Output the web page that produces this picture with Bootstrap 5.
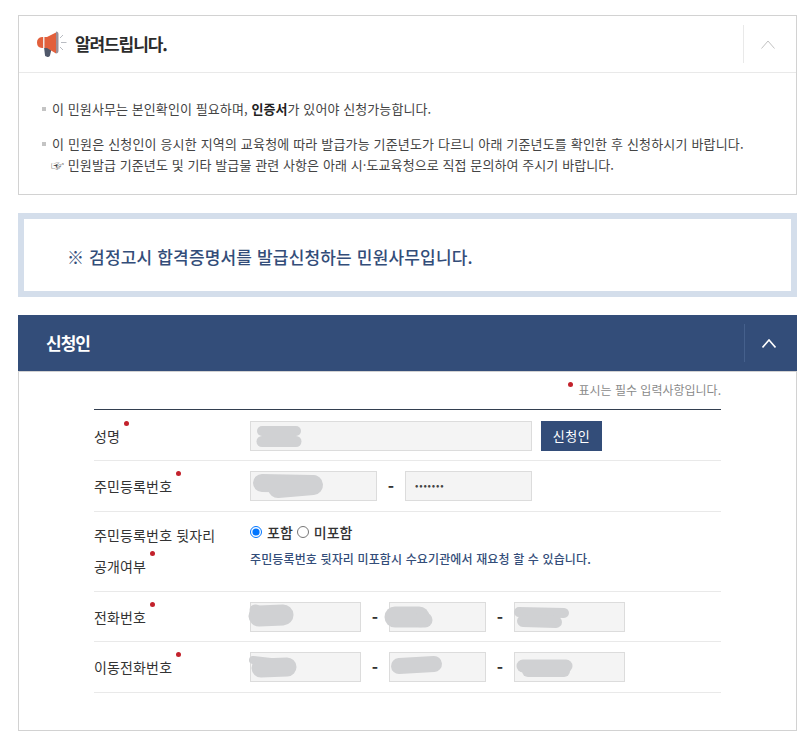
<!DOCTYPE html>
<html lang="ko">
<head>
<meta charset="utf-8">
<title>신청</title>
<link href="https://cdn.jsdelivr.net/npm/bootstrap@5.3.0/dist/css/bootstrap.min.css" rel="stylesheet">
<style>
html,body{background:#fff;overflow:hidden}
body{font-family:"Noto Sans CJK KR","Noto Sans",sans-serif;color:#333;font-size:13px}
.pg{width:779px;margin:15px 0 0 18px}
.pan{border:1px solid #d2d2d2;background:#fff}
.pan-h{height:57px;border-bottom:1px solid #e9e9e9;padding-left:18px}
.pan-t{font-size:17px;font-weight:700;color:#2c2c2c;letter-spacing:-1.1px;margin:0 0 2px 8px;line-height:1}
.tog{width:53px;height:38px;border-left:1px solid #e9e9e9;padding-right:4px}
.tog svg{display:block}
.pan-b{padding:25px 22px 17px 23px;height:121px;font-size:13px;color:#444;letter-spacing:.17px}
.nt{line-height:21px;position:relative;padding-left:10px;margin:0 0 14px;white-space:nowrap}
.nt::before{content:"";position:absolute;left:0;top:9px;width:4px;height:4px;background:#c4c4c4}
.nt b{color:#222}
.nt-s{letter-spacing:.09px}
.notice{margin-top:18px;height:84px;border:6px solid #d4deeb;background:#fff;padding:3px 0 0 43px;font-size:17px;font-weight:500;color:#334d79;letter-spacing:.17px}
.notice p{margin:0;line-height:1}
.blue-h{margin-top:18px;height:57px;background:#334d79;padding-left:28px;border-bottom:1px solid #d2d2d2}
.blue-t{font-size:17px;font-weight:700;color:#fff;letter-spacing:-1px;margin:0 0 2px;line-height:1}
.tog-w{border-left-color:#45608c}
.frm{border:1px solid #d2d2d2;border-top:0;height:359px;padding:0 75px}
.req-n{height:37px;padding-top:10px;font-size:12px;color:#8a8a8a;line-height:16px}
.tb{border-top:1px solid #333f50}
.fr{border-bottom:1px solid #e9e9e9;min-height:51px}
.fr-a{padding-top:2px}
.fr-c{min-height:80px}
.fr-d{min-height:50px;padding-top:1px}
.lab{width:156px;flex:none;font-size:14px;color:#333;letter-spacing:.15px}
.lab-t{position:relative;display:inline-block;line-height:1.2}
.lab-t::after{content:"";position:absolute;right:-9px;top:-7px;width:5px;height:5px;border-radius:50%;background:#c3222c}
.lab-p{line-height:31px;display:block}
.inp{position:relative;flex:none;height:30px}
.inp .form-control{height:30px;width:100%;padding:0 9px 3px;background:#f4f4f4;border:1px solid #dcdcdc;border-radius:0;font-size:10px;letter-spacing:.8px;color:#444}
.w-a{width:282px}.w-b{width:127px}.w-c{width:111px}.w-d{width:97px}
.blb{position:absolute;left:0;top:0;width:100%;height:100%;overflow:visible;pointer-events:none}
.blb path{fill:none;stroke:#d0d1d3;stroke-linecap:round;stroke-linejoin:round}
.b-btn{width:61px;height:30px;margin-left:9px;padding:0;background:#334d79;border:0;border-radius:0;color:#fff;font-size:13px;letter-spacing:.5px}
.dash{flex:none;width:28px;font-weight:700;color:#333;text-align:center;line-height:28px;font-size:17px}
.rad{font-size:14px;font-weight:500;color:#333;line-height:18px;padding-top:3px}
.rad .form-check-input{appearance:auto;-webkit-appearance:auto;width:12px;height:12px;margin:0 5px 0 0;float:none;border:0;background:none;accent-color:#0075ff}
.hint{font-size:12px;font-weight:500;color:#334d79;line-height:16px;margin:10px 0 0;letter-spacing:.13px}
.red-d{position:absolute;width:5px;height:5px;border-radius:50%;background:#c3222c;left:-10px;top:0}
.req-t{position:relative;display:inline-block}
.lab2{margin-top:8px}
.hand{margin-left:-1px}
</style>
</head>
<body>
<div class="pg">
  <section class="pan">
    <div class="pan-h d-flex align-items-center justify-content-between">
      <div class="d-flex align-items-center">
        <svg width="30" height="28" viewBox="0 0 30 28" aria-hidden="true">
          <path d="M7 17h8l-2 8.500q-.5 1.800-2.500 1.400l-1.200-.3q-1.600-.5-1.400-2.200z" fill="#50586a"/>
          <path d="M5 7h5v11H5q-5-.5-5-5.500T5 7z" fill="#e2603c"/>
          <path d="M10 7l9-4.500v21L10 18z" fill="#e2603c"/>
          <rect x="6" y="7" width="1.500" height="11" fill="#f1e6e2"/>
          <path d="M19 1.500q2.500 0 2.500 3v16q0 3-2.500 3z" fill="#9b8f98"/>
          <path d="M23 8l3-3M24 12.500h5.500M23 17l3 3" stroke="#b9bcc2" stroke-width="1" fill="none"/>
        </svg>
        <h2 class="pan-t">알려드립니다.</h2>
      </div>
      <div class="tog d-flex align-items-center justify-content-center">
        <svg width="14" height="9" viewBox="0 0 14 9"><path d="M.5 8.500L7 1l6.500 7.500" fill="none" stroke="#c2c2c2" stroke-width="1"/></svg>
      </div>
    </div>
    <div class="pan-b">
      <p class="nt nt-s">이 민원사무는 본인확인이 필요하며, <b>인증서</b>가 있어야 신청가능합니다.</p>
      <p class="nt mb-0">이 민원은 신청인이 응시한 지역의 교육청에 따라 발급가능 기준년도가 다르니 아래 기준년도를 확인한 후 신청하시기 바랍니다.<br><span class="nt-s"><span class="hand">☞</span> 민원발급 기준년도 및 기타 발급물 관련 사항은 아래 시·도교육청으로 직접 문의하여 주시기 바랍니다.</span></p>
    </div>
  </section>

  <div class="notice d-flex align-items-center"><p>※ 검정고시 합격증명서를 발급신청하는 민원사무입니다.</p></div>

  <div class="blue-h d-flex align-items-center justify-content-between">
    <h2 class="blue-t">신청인</h2>
    <div class="tog tog-w d-flex align-items-center justify-content-center">
      <svg width="14" height="9" viewBox="0 0 14 9"><path d="M.5 8.500L7 1l6.500 7.500" fill="none" stroke="#fff" stroke-width="1.600"/></svg>
    </div>
  </div>

  <div class="frm">
    <div class="req-n text-end"><span class="req-t"><i class="red-d"></i>표시는 필수 입력사항입니다.</span></div>
    <div class="tb">
      <div class="fr fr-a d-flex align-items-center">
        <div class="lab"><span class="lab-t">성명</span></div>
        <div class="inp w-a"><input class="form-control" readonly aria-label="성명"><svg class="blb" aria-hidden="true"><path d="M12 10H46" stroke-width="10"/><path d="M12 20.500H46" stroke-width="11"/></svg></div>
        <button type="button" class="btn b-btn">신청인</button>
      </div>
      <div class="fr d-flex align-items-center">
        <div class="lab"><span class="lab-t">주민등록번호</span></div>
        <div class="inp w-b"><input class="form-control" readonly aria-label="주민등록번호 앞자리"><svg class="blb" aria-hidden="true"><path d="M12 12L62 13" stroke-width="18"/><path d="M28 17L63 14" stroke-width="20"/></svg></div>
        <div class="dash">-</div>
        <div class="inp w-b"><input class="form-control" readonly type="password" value="1234567" aria-label="주민등록번호 뒷자리"></div>
      </div>
      <div class="fr fr-c d-flex">
        <div class="lab lab2"><span class="lab-p">주민등록번호 뒷자리</span><span class="lab-p"><span class="lab-t">공개여부</span></span></div>
        <div class="pt-2">
          <div class="rad d-flex align-items-center gap-1">
            <label class="d-inline-flex align-items-center"><input class="form-check-input" type="radio" name="open" checked>포함</label>
            <label class="d-inline-flex align-items-center"><input class="form-check-input" type="radio" name="open">미포함</label>
          </div>
          <p class="hint">주민등록번호 뒷자리 미포함시 수요기관에서 재요청 할 수 있습니다.</p>
        </div>
      </div>
      <div class="fr fr-d d-flex align-items-center">
        <div class="lab"><span class="lab-t">전화번호</span></div>
        <div class="inp w-c"><input class="form-control" readonly aria-label="전화번호 1"><svg class="blb" aria-hidden="true"><path d="M5 8L6 8" stroke-width="11"/><path d="M9 14L33 13" stroke-width="21"/></svg></div>
        <div class="dash">-</div>
        <div class="inp w-d"><input class="form-control" readonly aria-label="전화번호 2"><svg class="blb" aria-hidden="true"><path d="M6 15L30 15" stroke-width="21"/><path d="M32 18L36 18" stroke-width="15"/></svg></div>
        <div class="dash">-</div>
        <div class="inp w-c"><input class="form-control" readonly aria-label="전화번호 3"><svg class="blb" aria-hidden="true"><path d="M5 10L50 11" stroke-width="10"/><path d="M9 19L42 20" stroke-width="12"/></svg></div>
      </div>
      <div class="fr d-flex align-items-center">
        <div class="lab"><span class="lab-t">이동전화번호</span></div>
        <div class="inp w-c"><input class="form-control" readonly aria-label="이동전화번호 1"><svg class="blb" aria-hidden="true"><path d="M3 8L38 12" stroke-width="8"/><path d="M11 16L37 15" stroke-width="19"/></svg></div>
        <div class="dash">-</div>
        <div class="inp w-d"><input class="form-control" readonly aria-label="이동전화번호 2"><svg class="blb" aria-hidden="true"><path d="M10 14L45 12" stroke-width="16"/></svg></div>
        <div class="dash">-</div>
        <div class="inp w-c"><input class="form-control" readonly aria-label="이동전화번호 3"><svg class="blb" aria-hidden="true"><path d="M9 14L52 14" stroke-width="13"/><path d="M14 19L50 19" stroke-width="12"/></svg></div>
      </div>
    </div>
  </div>
</div>
</body>
</html>
